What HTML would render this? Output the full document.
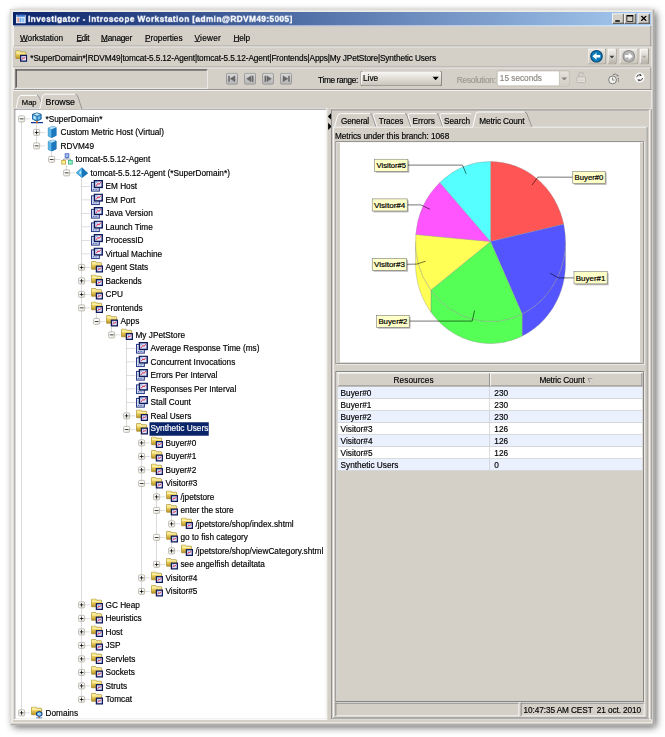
<!DOCTYPE html>
<html><head><meta charset="utf-8"><title>Investigator - Introscope Workstation</title>
<style>
html,body{margin:0;padding:0;background:#fff;}
body{width:665px;height:737px;overflow:hidden;position:relative;font-family:"Liberation Sans",sans-serif;}
#win{position:absolute;left:10.0px;top:9.2px;width:859px;height:954.8px;transform:scale(0.75);transform-origin:0 0;background:#D4D0C8;font-size:11px;color:#000;-webkit-text-stroke:0.22px currentColor;
 box-shadow:4px 4px 10px rgba(0,0,0,.62),0 0 12px rgba(0,0,0,.04);}
#win *{box-sizing:border-box;}
.abs{position:absolute;}
.mn::first-letter{text-decoration:underline;}
.t{position:absolute;white-space:pre;line-height:14px;height:14px;}
.frame1{position:absolute;left:0;top:0;right:0;bottom:0;border:1px solid;border-color:#D4D0C8 #CCC8C0 #CCC8C0 #D4D0C8;}
.frame2{position:absolute;left:1px;top:1px;right:1px;bottom:1px;border:1px solid;border-color:#fff #8C8C8C #8C8C8C #fff;box-shadow:inset 0 0 0 2px #EEECE7;}
#title{position:absolute;left:4px;top:3.7px;width:851px;height:19.7px;background:linear-gradient(90deg,#0A246A 0%,#A6CAF0 100%);}
#title .tt{position:absolute;left:20px;top:2px;will-change:transform;color:#fff;font-weight:bold;font-size:11px;line-height:14px;white-space:pre;letter-spacing:0.56px;-webkit-text-stroke:0.4px #fff;}
.cap{position:absolute;top:2px;width:16px;height:14px;background:#D4D0C8;border:1px solid;border-color:#fff #404040 #404040 #fff;box-shadow:inset -1px -1px 0 #808080;}
.sel{background:#0A246A;color:#fff;margin-top:-0.7px;height:17.4px !important;line-height:17.4px !important;}
.row{position:absolute;height:18px;}
.lbl{position:absolute;top:1px;height:16px;line-height:16px;white-space:pre;padding:0 1px;}
.box{position:absolute;width:9px;height:9px;background:linear-gradient(135deg,#fff 40%,#E4E0D4);border:1px solid #A8A498;border-radius:2px;}
.box i{position:absolute;left:1px;top:3px;width:5px;height:1px;background:#000;}
.box b{position:absolute;left:3px;top:1px;width:1px;height:5px;background:#000;}
.vl{position:absolute;width:1px;background:#cfcfcf;}
.hl{position:absolute;height:1px;background:#d4d4d4;}
.ic{position:absolute;width:16px;height:16px;overflow:visible;}
</style></head>
<body>
<div id="win">

<svg width="0" height="0" style="position:absolute">
<defs>
<linearGradient id="gFold" x1="0" y1="0" x2="0" y2="1"><stop offset="0" stop-color="#FFF6A8"/><stop offset="0.4" stop-color="#F2D660"/><stop offset="1" stop-color="#B8942A"/></linearGradient>
<linearGradient id="gBlue" x1="0" y1="0" x2="1" y2="1"><stop offset="0" stop-color="#7CC8EE"/><stop offset="1" stop-color="#1474B8"/></linearGradient>
<linearGradient id="gPb" x1="0" y1="0" x2="0" y2="1"><stop offset="0" stop-color="#DADADA"/><stop offset="1" stop-color="#B4B4B4"/></linearGradient>
<linearGradient id="gBtn" x1="0" y1="0" x2="0" y2="1"><stop offset="0" stop-color="#FFFFFF"/><stop offset="1" stop-color="#C9C5BC"/></linearGradient>
<symbol id="ic-metric" viewBox="0 0 16 16">
 <rect x="0.7" y="3.2" width="10.4" height="11.6" fill="#EEF3FC" stroke="#2A3A86" stroke-width="1.4"/>
 <path d="M2.4 12.6h7.2" stroke="#4464BC" stroke-width="1.7" stroke-dasharray="1.5 0.8"/>
 <path d="M2.5 5.4v5" stroke="#A8BCE8" stroke-width="1.1"/>
 <rect x="4.6" y="0.9" width="10.4" height="9" fill="#DDE8FF" stroke="#0E1A58" stroke-width="1.9"/>
 <path d="M6.6 8 L9.4 4.4 L10.6 6 L13.2 2.8" stroke="#E02C48" stroke-width="1.3" fill="none"/>
 <path d="M6.2 3.2h2.4" stroke="#6E94E6" stroke-width="1.1"/>
</symbol>
<symbol id="ic-folder" viewBox="0 0 16 16">
 <path d="M0.5 1.6 Q0.5 0.6 1.5 0.6 H5.6 Q6.5 0.6 6.9 1.3 L7.5 2.3 H13.2 Q14.2 2.3 14.2 3.2 V10.2 Q14.2 11 13.3 11 H1.4 Q0.5 11 0.5 10.2 Z" fill="url(#gFold)" stroke="#A08422" stroke-width="0.9"/>
 <path d="M1.2 3.9 H13.5" stroke="#FFFBD4" stroke-width="0.9"/>
</symbol>
<symbol id="ic-fm" viewBox="0 0 16 16">
 <use href="#ic-folder"/>
 <rect x="7.2" y="6.9" width="8" height="7.6" fill="#DCE6FF" stroke="#101A58" stroke-width="1.7"/>
 <path d="M8.9 12.6 L10.7 9.9 L11.6 11.2 L13.5 8.8" stroke="#E02C48" stroke-width="1.2" fill="none"/>
 <path d="M8.8 8.9h2" stroke="#6E8FE0" stroke-width="0.9"/>
</symbol>
<symbol id="ic-fd" viewBox="0 0 16 16">
 <use href="#ic-folder"/>
 <path d="M11 6.4 L14.6 8 V11.8 L11 13.6 L7.4 11.8 V8 Z" fill="#3C9CE0" stroke="#0A2C74" stroke-width="1.1"/>
 <path d="M9 9 L11 8.2 L13 9 V11 L11 12 L9 11 Z" fill="#D4EEFC"/>
 <path d="M11 9.4v1.6" stroke="#2A7CC8" stroke-width="1"/>
 <path d="M6.8 15.3h8.4" stroke="#2C70D0" stroke-width="1.3"/>
 <rect x="10.2" y="13.6" width="1.6" height="2.2" fill="#C85A18"/>
</symbol>
<symbol id="ic-sd" viewBox="0 0 16 16">
 <path d="M7.8 0.3 L13.6 2.6 V8.8 L7.8 11.6 L2 8.8 V2.6 Z" fill="#3A98D8" stroke="#0E4C84" stroke-width="1"/>
 <path d="M7.8 0.3 L13.6 2.6 L7.8 5.1 L2 2.6 Z" fill="#B6E4F8" stroke="#0E4C84" stroke-width="0.7"/>
 <path d="M2 2.6 L7.8 5.1 V11.6 L2 8.8 Z" fill="#6CC0EC" stroke="#0E4C84" stroke-width="0.7"/>
 <path d="M3.6 5 L6.2 6.1 V9 L3.6 7.8 Z" fill="#D2F0FC"/>
 <path d="M9.4 6.2 L12.2 5 V7.8 L9.4 9.2 Z" fill="#7CC6EE"/>
 <path d="M0 13.6 H16" stroke="#0B3A9A" stroke-width="1.7"/>
 <rect x="6.7" y="11.4" width="2.2" height="3" fill="#D86A1C"/>
</symbol>
<symbol id="ic-host" viewBox="0 0 16 16">
 <path d="M3 2.6 L9.4 0.4 L13.6 2 V12.6 L7.4 15.6 L3 13.4 Z" fill="#1F80C4" stroke="#0F5C9A" stroke-width="0.7"/>
 <path d="M3 2.6 L9.4 0.4 L13.6 2 L7.4 4.6 Z" fill="#B4E2F8"/>
 <path d="M3 2.6 L7.4 4.6 V15.6 L3 13.4 Z" fill="#5CB6E6"/>
 <path d="M7.4 4.6 L13.6 2 V12.6 L7.4 15.6 Z" fill="#1C78BC"/>
</symbol>
<symbol id="ic-proc" viewBox="0 0 16 16">
 <path d="M8 6 V8 M3.5 10 V8 H12.5 V10" stroke="#6E7E8E" stroke-width="1" fill="none"/>
 <rect x="5.5" y="1" width="5" height="5" fill="#A0BCF0" stroke="#3858BC" stroke-width="1"/>
 <rect x="1" y="9.8" width="5" height="5" fill="#FAEE98" stroke="#C0A028" stroke-width="1"/>
 <rect x="10" y="9.8" width="5" height="5" fill="#98F2CC" stroke="#28A880" stroke-width="1"/>
</symbol>
<symbol id="ic-agent" viewBox="0 0 16 16">
 <path d="M8 1.6 L15.6 9 L8 14.8 L0.4 8.4 Z" fill="#1F84C8" stroke="#0E5A98" stroke-width="0.7"/>
 <path d="M8 1.6 L8 14.8 L0.4 8.4 Z" fill="#4FB0E6"/>
 <path d="M8 1.6 L15.6 9 L8 14.8 Z" fill="#1774B8"/>
 <path d="M3.8 8.2 L6.6 5.2 L6.6 10.4 Z" fill="#C8ECFC"/>
</symbol>
</defs></svg>

<div class="frame1"></div><div class="frame2"></div>
<div id="title">
<svg class="abs" style="left:3.5px;top:3.1px" width="13" height="12.8" viewBox="0 0 16 16" preserveAspectRatio="none">
<rect x="0.5" y="1.5" width="15" height="13" fill="#fff" stroke="#fff"/>
<rect x="1" y="1" width="14" height="3.2" fill="#3A78D8"/>
<rect x="2" y="5.5" width="3" height="8" fill="#D8A090"/><rect x="5.5" y="5.5" width="3.5" height="8" fill="#7AA4E8"/><rect x="9.5" y="5.5" width="4.5" height="8" fill="#8EC0F4"/>
</svg>
<div class="tt">Investigator - Introscope Workstation [admin@RDVM49:5005]</div>
<div class="cap" style="left:799px"><div class="abs" style="left:3px;top:8px;width:6px;height:2px;background:#000"></div></div>
<div class="cap" style="left:815px"><div class="abs" style="left:2px;top:1px;width:9px;height:9px;border:1px solid #000;border-top-width:2px"></div></div>
<div class="cap" style="left:833px"><svg class="abs" style="left:3px;top:2px" width="8" height="7" viewBox="0 0 8 7"><path d="M0.5 0 L7.5 7 M7.5 0 L0.5 7" stroke="#000" stroke-width="1.6"/></svg></div>
</div>
<div class="t mn" style="letter-spacing:-0.051px;left:13.33px;top:30.63px">Workstation</div>
<div class="t mn" style="letter-spacing:-0.575px;left:88.67px;top:30.63px">Edit</div>
<div class="t mn" style="letter-spacing:-0.301px;left:121.33px;top:30.63px">Manager</div>
<div class="t mn" style="letter-spacing:-0.014px;left:180.00px;top:30.63px">Properties</div>
<div class="t mn" style="letter-spacing:0.315px;left:246.00px;top:30.63px">Viewer</div>
<div class="t mn" style="letter-spacing:-0.160px;left:298.00px;top:30.63px">Help</div>
<div class="abs" style="left:4px;width:851px;top:22.40px;height:27.47px;border:1px solid;border-color:#fff #808080 #808080 #fff"></div>
<div class="abs" style="left:4px;width:851px;top:49.83px;height:1px;background:#fff"></div>
<svg class="ic" style="left:6.93px;top:54.80px"><use href="#ic-fm"/></svg>
<div class="t" id="path" style="letter-spacing:-0.159px;left:27.07px;top:57.70px">*SuperDomain*|RDVM49|tomcat-5.5.12-Agent|tomcat-5.5.12-Agent|Frontends|Apps|My JPetStore|Synthetic Users</div>
<div class="abs" style="left:769.87px;top:52.13px;width:25.20px;height:22.13px;border:1px solid;border-color:#E4E1DA #8E8A80 #86827A #E4E1DA;border-radius:3px;background:linear-gradient(180deg,#E6E3DD 0%,#D8D5CD 60%,#C6C2B8 100%);box-shadow:inset 1px 1px 0 rgba(255,255,255,.95)"><svg class="abs" style="left:2.60px;top:1.07px" width="18" height="18" viewBox="0 0 18 18"><circle cx="9" cy="9" r="7.6" fill="#0A7EBC" stroke="#0A4472" stroke-width="1.5"/><path d="M3.6 9 L9 4.2 V7.2 H14 V10.8 H9 V13.8 Z" fill="#fff"/></svg></div>
<div class="abs" style="left:795.87px;top:52.13px;width:12.80px;height:22.13px;border:1px solid;border-color:#E4E1DA #8E8A80 #86827A #E4E1DA;border-radius:3px;background:linear-gradient(180deg,#F4F2EE 0%,#DCD9D1 45%,#B4B0A6 100%);box-shadow:inset 1px 1px 0 rgba(255,255,255,.95)"><svg class="abs" style="left:2.40px;top:8.57px" width="7" height="4" viewBox="0 0 7 4"><path d="M0 0 H7 L3.5 4 Z" fill="#404040"/></svg></div>
<div class="abs" style="left:812.27px;top:52.13px;width:25.73px;height:22.13px;border:1px solid;border-color:#E4E1DA #8E8A80 #86827A #E4E1DA;border-radius:3px;background:linear-gradient(180deg,#E6E3DD 0%,#D8D5CD 60%,#C6C2B8 100%);box-shadow:inset 1px 1px 0 rgba(255,255,255,.95)"><svg class="abs" style="left:2.87px;top:1.07px" width="18" height="18" viewBox="0 0 18 18"><circle cx="9" cy="9" r="7.6" fill="#B4B4B4" stroke="#8C8C8C" stroke-width="1.4"/><path d="M14.4 9 L9 4.2 V7.2 H4 V10.8 H9 V13.8 Z" fill="#fff"/></svg></div>
<div class="abs" style="left:838.80px;top:52.13px;width:13.07px;height:22.13px;border:1px solid;border-color:#E4E1DA #8E8A80 #86827A #E4E1DA;border-radius:3px;background:linear-gradient(180deg,#F4F2EE 0%,#DCD9D1 45%,#B4B0A6 100%);box-shadow:inset 1px 1px 0 rgba(255,255,255,.95)"><svg class="abs" style="left:2.53px;top:8.57px" width="7" height="4" viewBox="0 0 7 4"><path d="M0 0 H7 L3.5 4 Z" fill="#B0ACA4"/></svg></div>
<div class="abs" style="left:4px;top:76.87px;width:851px;height:1px;background:#808080"></div>
<div class="abs" style="left:4px;top:77.87px;width:851px;height:29.87px;border-top:1px solid #fff;border-bottom:1px solid #808080;border-left:1px solid #fff;border-right:1px solid #808080"></div>
<div class="abs" style="left:4px;top:107.73px;width:851px;height:1px;background:#fff"></div>
<div class="abs" style="left:7.20px;top:80.00px;width:256.80px;height:25.87px;border:1px solid;border-color:#6C6C6C #fff #fff #6C6C6C;"><div class="abs" style="left:0;top:0;right:0;bottom:0;border:1px solid;border-color:#3C3C3C #D4D0C8 #D4D0C8 #3C3C3C"></div></div>
<svg class="abs" style="left:288.40px;top:84.93px" width="16" height="16" viewBox="0 0 16 16"><rect x="0.6" y="0.6" width="14.8" height="14.8" rx="2.2" fill="url(#gPb)" stroke="#8E8E8E" stroke-width="1.1"/><path d="M4 4 V12" stroke="#686868" stroke-width="2"/><path d="M12 4 V12 L5.4 8 Z" fill="#686868" stroke="#686868" stroke-width="0.5"/></svg>
<svg class="abs" style="left:312.27px;top:84.93px" width="16" height="16" viewBox="0 0 16 16"><rect x="0.6" y="0.6" width="14.8" height="14.8" rx="2.2" fill="url(#gPb)" stroke="#8E8E8E" stroke-width="1.1"/><path d="M11.6 4 V12" stroke="#686868" stroke-width="2"/><path d="M9.6 4 V12 L3.4 8 Z" fill="#686868" stroke="#686868" stroke-width="0.5"/></svg>
<svg class="abs" style="left:336.13px;top:84.93px" width="16" height="16" viewBox="0 0 16 16"><rect x="0.6" y="0.6" width="14.8" height="14.8" rx="2.2" fill="url(#gPb)" stroke="#8E8E8E" stroke-width="1.1"/><path d="M4.4 4 V12" stroke="#686868" stroke-width="2"/><path d="M6.4 4 V12 L12.6 8 Z" fill="#686868" stroke="#686868" stroke-width="0.5"/></svg>
<svg class="abs" style="left:360.00px;top:84.93px" width="16" height="16" viewBox="0 0 16 16"><rect x="0.6" y="0.6" width="14.8" height="14.8" rx="2.2" fill="url(#gPb)" stroke="#8E8E8E" stroke-width="1.1"/><path d="M12 4 V12" stroke="#686868" stroke-width="2"/><path d="M4 4 V12 L10.6 8 Z" fill="#686868" stroke="#686868" stroke-width="0.5"/></svg>
<div class="t" style="letter-spacing:-0.452px;left:410.67px;top:86.50px">Time range:</div>
<div class="abs" style="left:466.67px;top:81.60px;width:109.60px;height:21.33px;border:1px solid;border-color:#8C887E #76726A #6C6860 #8C887E;border-radius:3.5px;background:linear-gradient(180deg,#FAFAF8 0%,#E4E1DA 45%,#C8C4BA 100%);box-shadow:inset 1px 1px 0 #fff"><div class="t" style="left:3px;top:2.5px">Live</div><svg class="abs" style="right:3.6px;top:7.5px" width="9" height="5" viewBox="0 0 9 5"><path d="M0 0 H9 L4.5 5 Z" fill="#000"/></svg></div>
<div class="t" style="letter-spacing:-0.277px;left:595.73px;top:86.50px;color:#9C9890">Resolution:</div>
<div class="abs" style="left:649.07px;top:81.60px;width:96.93px;height:21.33px;border:1px solid #B4B0A6;border-radius:3px;background:#fff;overflow:hidden"><div class="t" style="left:3px;top:2.5px;color:#8C8880">15 seconds</div><div class="abs" style="left:81.93px;top:-1px;bottom:-1px;right:-1px;border:1px solid #B4B0A6;border-radius:0 3px 3px 0;background:linear-gradient(180deg,#E6E3DC,#D2CEC5)"><svg class="abs" style="left:2.5px;top:8px" width="8" height="4.5" viewBox="0 0 8 4.5"><path d="M0 0 H8 L4 4.5 Z" fill="#8C8880"/></svg></div></div>
<svg class="abs" style="left:754.93px;top:83.47px" width="13" height="16" viewBox="0 0 13 16">
<path d="M3.4 8 V4.6 Q3.4 1.2 6.6 1.2 Q9.8 1.2 9.8 4.6" fill="none" stroke="#C2BEB6" stroke-width="2"/>
<rect x="0.8" y="7.6" width="11.4" height="7.6" rx="1" fill="#EAE8E3" stroke="#B6B2AA" stroke-width="1.3"/>
<path d="M2 10.4h9M2 12.6h9" stroke="#C4C0B8" stroke-width="0.9"/></svg>
<svg class="abs" style="left:797.33px;top:84.53px" width="17" height="16" viewBox="0 0 17 16">
<circle cx="6.4" cy="9.6" r="5.2" fill="#F4F2EE" stroke="#6E6E6E" stroke-width="1.2"/>
<path d="M6.4 6.4 V9.8 H9" stroke="#6E6E6E" stroke-width="1.1" fill="none"/>
<path d="M6.8 2.6 Q10.8 -0.2 13.2 4.4" stroke="#6E6E6E" stroke-width="1.1" fill="none"/>
<path d="M12 4.4 L14.6 4.6 L13.4 2.2" fill="#6E6E6E"/>
<path d="M14.2 7v2M14.2 10.4v1.6" stroke="#707070" stroke-width="1.4"/></svg>
<svg class="abs" style="left:831.70px;top:84.37px" width="15" height="15" viewBox="0 0 15 15">
<circle cx="7.5" cy="7.5" r="6.8" fill="#FAFAF8" stroke="#DCD9D2" stroke-width="0.8"/>
<path d="M3.6 7 Q4 3.6 7.6 3.6 L9 4.2" stroke="#3C3C3C" stroke-width="1.3" fill="none"/>
<path d="M11.4 8 Q11 11.4 7.4 11.4 L6 10.8" stroke="#3C3C3C" stroke-width="1.3" fill="none"/>
<path d="M8 2.4 L10.6 4.8 L7.4 5.8 Z" fill="#3C3C3C"/><path d="M7 12.6 L4.4 10.2 L7.6 9.2 Z" fill="#3C3C3C"/></svg>
<svg class="abs" style="left:0;top:0;overflow:visible" width="859" height="954.8" viewBox="0 0 859 954.8">
<!-- Map tab -->
<path d="M8.00 132.53 C10.00 126.40 10.00 115.73 14.67 115.20 L36.00 115.20 C39.33 115.47 40.00 121.07 44.67 132.53" fill="#D4D0C8" stroke="none"/>
<path d="M8.00 132.53 C10.00 126.40 10.00 115.73 14.67 115.20 L36.00 115.20" fill="none" stroke="#fff" stroke-width="1.3"/>
<path d="M36.00 115.20 C39.33 115.47 40.00 121.07 44.67 132.53" fill="none" stroke="#808080" stroke-width="1"/>
</svg>
<div class="abs" style="left:6.13px;top:133.33px;width:415.47px;height:814.13px;background:#fff;border:1px solid;border-width:1.7px 1px 1px 1.7px;border-color:#686868 #E8E6E0 #E8E6E0 #686868;box-shadow:0 0 0 1px #fff"></div>
<svg class="abs" style="left:0;top:0;overflow:visible" width="859" height="954.8" viewBox="0 0 859 954.8">
<path d="M39.47 133.87 C42.67 126.40 41.33 113.87 46.67 113.60 L87.33 113.60 C90.67 113.87 91.33 121.07 96.00 133.87 Z" fill="#D4D0C8" stroke="none"/>
<path d="M39.47 133.33 C42.67 126.40 41.33 113.87 46.67 113.60 L87.33 113.60" fill="none" stroke="#fff" stroke-width="1.3"/>
<path d="M87.33 113.60 C90.67 113.87 91.33 121.07 96.00 133.33" fill="none" stroke="#808080" stroke-width="1"/>
</svg>
<div class="t" style="letter-spacing:-0.033px;left:15.73px;top:117.83px;font-size:10.2px">Map</div>
<div class="t" style="letter-spacing:-0.024px;left:47.47px;top:116.90px;font-size:11.8px">Browse</div>
<div class="hl" style="left:15.20px;top:145.63px;width:12.07px"></div>
<div class="hl" style="left:35.20px;top:163.63px;width:12.07px"></div>
<div class="hl" style="left:35.20px;top:181.63px;width:12.07px"></div>
<div class="hl" style="left:55.20px;top:199.63px;width:12.07px"></div>
<div class="hl" style="left:75.20px;top:217.63px;width:12.07px"></div>
<div class="hl" style="left:95.20px;top:235.63px;width:12.07px"></div>
<div class="hl" style="left:95.20px;top:253.63px;width:12.07px"></div>
<div class="hl" style="left:95.20px;top:271.63px;width:12.07px"></div>
<div class="hl" style="left:95.20px;top:289.63px;width:12.07px"></div>
<div class="hl" style="left:95.20px;top:307.63px;width:12.07px"></div>
<div class="hl" style="left:95.20px;top:325.63px;width:12.07px"></div>
<div class="hl" style="left:95.20px;top:343.63px;width:12.07px"></div>
<div class="hl" style="left:95.20px;top:361.63px;width:12.07px"></div>
<div class="hl" style="left:95.20px;top:379.63px;width:12.07px"></div>
<div class="hl" style="left:95.20px;top:397.63px;width:12.07px"></div>
<div class="hl" style="left:115.20px;top:415.63px;width:12.07px"></div>
<div class="hl" style="left:135.20px;top:433.63px;width:12.07px"></div>
<div class="hl" style="left:155.20px;top:451.63px;width:12.07px"></div>
<div class="hl" style="left:155.20px;top:469.63px;width:12.07px"></div>
<div class="hl" style="left:155.20px;top:487.63px;width:12.07px"></div>
<div class="hl" style="left:155.20px;top:505.63px;width:12.07px"></div>
<div class="hl" style="left:155.20px;top:523.63px;width:12.07px"></div>
<div class="hl" style="left:155.20px;top:541.63px;width:12.07px"></div>
<div class="hl" style="left:155.20px;top:559.63px;width:12.07px"></div>
<div class="hl" style="left:175.20px;top:577.63px;width:12.07px"></div>
<div class="hl" style="left:175.20px;top:595.63px;width:12.07px"></div>
<div class="hl" style="left:175.20px;top:613.63px;width:12.07px"></div>
<div class="hl" style="left:175.20px;top:631.63px;width:12.07px"></div>
<div class="hl" style="left:195.20px;top:649.63px;width:12.07px"></div>
<div class="hl" style="left:195.20px;top:667.63px;width:12.07px"></div>
<div class="hl" style="left:215.20px;top:685.63px;width:12.07px"></div>
<div class="hl" style="left:195.20px;top:703.63px;width:12.07px"></div>
<div class="hl" style="left:215.20px;top:721.63px;width:12.07px"></div>
<div class="hl" style="left:195.20px;top:739.63px;width:12.07px"></div>
<div class="hl" style="left:175.20px;top:757.63px;width:12.07px"></div>
<div class="hl" style="left:175.20px;top:775.63px;width:12.07px"></div>
<div class="hl" style="left:95.20px;top:793.63px;width:12.07px"></div>
<div class="hl" style="left:95.20px;top:811.63px;width:12.07px"></div>
<div class="hl" style="left:95.20px;top:829.63px;width:12.07px"></div>
<div class="hl" style="left:95.20px;top:847.63px;width:12.07px"></div>
<div class="hl" style="left:95.20px;top:865.63px;width:12.07px"></div>
<div class="hl" style="left:95.20px;top:883.63px;width:12.07px"></div>
<div class="hl" style="left:95.20px;top:901.63px;width:12.07px"></div>
<div class="hl" style="left:95.20px;top:919.63px;width:12.07px"></div>
<div class="hl" style="left:15.20px;top:937.63px;width:12.07px"></div>
<div class="vl" style="left:34.70px;top:154.13px;height:28.00px"></div>
<div class="vl" style="left:54.70px;top:190.13px;height:10.00px"></div>
<div class="vl" style="left:74.70px;top:208.13px;height:10.00px"></div>
<div class="vl" style="left:94.70px;top:226.13px;height:694.00px"></div>
<div class="vl" style="left:114.70px;top:406.13px;height:10.00px"></div>
<div class="vl" style="left:134.70px;top:424.13px;height:10.00px"></div>
<div class="vl" style="left:154.70px;top:442.13px;height:118.00px"></div>
<div class="vl" style="left:174.70px;top:568.13px;height:208.00px"></div>
<div class="vl" style="left:194.70px;top:640.13px;height:100.00px"></div>
<div class="vl" style="left:214.70px;top:676.13px;height:10.00px"></div>
<div class="vl" style="left:214.70px;top:712.13px;height:10.00px"></div>
<div class="vl" style="left:14.70px;top:146.13px;height:792.00px"></div>
<div class="box" style="left:10.70px;top:141.63px"><i></i></div>
<svg class="ic" style="left:28.27px;top:137.53px"><use href="#ic-sd"/></svg>
<div class="lbl" style="left:46.33px;top:138.13px">*SuperDomain*</div>
<div class="box" style="left:30.70px;top:159.63px"><i></i><b></b></div>
<svg class="ic" style="left:48.27px;top:155.53px"><use href="#ic-host"/></svg>
<div class="lbl" style="left:66.33px;top:156.13px">Custom Metric Host (Virtual)</div>
<div class="box" style="left:30.70px;top:177.63px"><i></i></div>
<svg class="ic" style="left:48.27px;top:173.53px"><use href="#ic-host"/></svg>
<div class="lbl" style="left:66.33px;top:174.13px">RDVM49</div>
<div class="box" style="left:50.70px;top:195.63px"><i></i></div>
<svg class="ic" style="left:68.27px;top:191.53px"><use href="#ic-proc"/></svg>
<div class="lbl" style="left:86.33px;top:192.13px">tomcat-5.5.12-Agent</div>
<div class="box" style="left:70.70px;top:213.63px"><i></i></div>
<svg class="ic" style="left:88.27px;top:209.53px"><use href="#ic-agent"/></svg>
<div class="lbl" style="left:106.33px;top:210.13px">tomcat-5.5.12-Agent (*SuperDomain*)</div>
<svg class="ic" style="left:108.27px;top:227.53px"><use href="#ic-metric"/></svg>
<div class="lbl" style="left:126.33px;top:228.13px">EM Host</div>
<svg class="ic" style="left:108.27px;top:245.53px"><use href="#ic-metric"/></svg>
<div class="lbl" style="left:126.33px;top:246.13px">EM Port</div>
<svg class="ic" style="left:108.27px;top:263.53px"><use href="#ic-metric"/></svg>
<div class="lbl" style="left:126.33px;top:264.13px">Java Version</div>
<svg class="ic" style="left:108.27px;top:281.53px"><use href="#ic-metric"/></svg>
<div class="lbl" style="left:126.33px;top:282.13px">Launch Time</div>
<svg class="ic" style="left:108.27px;top:299.53px"><use href="#ic-metric"/></svg>
<div class="lbl" style="left:126.33px;top:300.13px">ProcessID</div>
<svg class="ic" style="left:108.27px;top:317.53px"><use href="#ic-metric"/></svg>
<div class="lbl" style="left:126.33px;top:318.13px">Virtual Machine</div>
<div class="box" style="left:90.70px;top:339.63px"><i></i><b></b></div>
<svg class="ic" style="left:108.27px;top:335.53px"><use href="#ic-fm"/></svg>
<div class="lbl" style="left:126.33px;top:336.13px">Agent Stats</div>
<div class="box" style="left:90.70px;top:357.63px"><i></i><b></b></div>
<svg class="ic" style="left:108.27px;top:353.53px"><use href="#ic-fm"/></svg>
<div class="lbl" style="left:126.33px;top:354.13px">Backends</div>
<div class="box" style="left:90.70px;top:375.63px"><i></i><b></b></div>
<svg class="ic" style="left:108.27px;top:371.53px"><use href="#ic-fm"/></svg>
<div class="lbl" style="left:126.33px;top:372.13px">CPU</div>
<div class="box" style="left:90.70px;top:393.63px"><i></i></div>
<svg class="ic" style="left:108.27px;top:389.53px"><use href="#ic-fm"/></svg>
<div class="lbl" style="left:126.33px;top:390.13px">Frontends</div>
<div class="box" style="left:110.70px;top:411.63px"><i></i></div>
<svg class="ic" style="left:128.27px;top:407.53px"><use href="#ic-fm"/></svg>
<div class="lbl" style="left:146.33px;top:408.13px">Apps</div>
<div class="box" style="left:130.70px;top:429.63px"><i></i></div>
<svg class="ic" style="left:148.27px;top:425.53px"><use href="#ic-fm"/></svg>
<div class="lbl" style="left:166.33px;top:426.13px">My JPetStore</div>
<svg class="ic" style="left:168.27px;top:443.53px"><use href="#ic-metric"/></svg>
<div class="lbl" style="left:186.33px;top:444.13px">Average Response Time (ms)</div>
<svg class="ic" style="left:168.27px;top:461.53px"><use href="#ic-metric"/></svg>
<div class="lbl" style="left:186.33px;top:462.13px">Concurrent Invocations</div>
<svg class="ic" style="left:168.27px;top:479.53px"><use href="#ic-metric"/></svg>
<div class="lbl" style="left:186.33px;top:480.13px">Errors Per Interval</div>
<svg class="ic" style="left:168.27px;top:497.53px"><use href="#ic-metric"/></svg>
<div class="lbl" style="left:186.33px;top:498.13px">Responses Per Interval</div>
<svg class="ic" style="left:168.27px;top:515.53px"><use href="#ic-metric"/></svg>
<div class="lbl" style="left:186.33px;top:516.13px">Stall Count</div>
<div class="box" style="left:150.70px;top:537.63px"><i></i><b></b></div>
<svg class="ic" style="left:168.27px;top:533.53px"><use href="#ic-fm"/></svg>
<div class="lbl" style="left:186.33px;top:534.13px">Real Users</div>
<div class="box" style="left:150.70px;top:555.63px"><i></i></div>
<svg class="ic" style="left:168.27px;top:551.53px"><use href="#ic-fm"/></svg>
<div class="lbl sel" style="left:186.33px;top:552.13px">Synthetic Users</div>
<div class="box" style="left:170.70px;top:573.63px"><i></i><b></b></div>
<svg class="ic" style="left:188.27px;top:569.53px"><use href="#ic-fm"/></svg>
<div class="lbl" style="left:206.33px;top:570.13px">Buyer#0</div>
<div class="box" style="left:170.70px;top:591.63px"><i></i><b></b></div>
<svg class="ic" style="left:188.27px;top:587.53px"><use href="#ic-fm"/></svg>
<div class="lbl" style="left:206.33px;top:588.13px">Buyer#1</div>
<div class="box" style="left:170.70px;top:609.63px"><i></i><b></b></div>
<svg class="ic" style="left:188.27px;top:605.53px"><use href="#ic-fm"/></svg>
<div class="lbl" style="left:206.33px;top:606.13px">Buyer#2</div>
<div class="box" style="left:170.70px;top:627.63px"><i></i></div>
<svg class="ic" style="left:188.27px;top:623.53px"><use href="#ic-fm"/></svg>
<div class="lbl" style="left:206.33px;top:624.13px">Visitor#3</div>
<div class="box" style="left:190.70px;top:645.63px"><i></i><b></b></div>
<svg class="ic" style="left:208.27px;top:641.53px"><use href="#ic-fm"/></svg>
<div class="lbl" style="left:226.33px;top:642.13px">/jpetstore</div>
<div class="box" style="left:190.70px;top:663.63px"><i></i></div>
<svg class="ic" style="left:208.27px;top:659.53px"><use href="#ic-fm"/></svg>
<div class="lbl" style="left:226.33px;top:660.13px">enter the store</div>
<div class="box" style="left:210.70px;top:681.63px"><i></i><b></b></div>
<svg class="ic" style="left:228.27px;top:677.53px"><use href="#ic-fm"/></svg>
<div class="lbl" style="left:246.33px;top:678.13px">/jpetstore/shop/index.shtml</div>
<div class="box" style="left:190.70px;top:699.63px"><i></i></div>
<svg class="ic" style="left:208.27px;top:695.53px"><use href="#ic-fm"/></svg>
<div class="lbl" style="left:226.33px;top:696.13px">go to fish category</div>
<div class="box" style="left:210.70px;top:717.63px"><i></i><b></b></div>
<svg class="ic" style="left:228.27px;top:713.53px"><use href="#ic-fm"/></svg>
<div class="lbl" style="left:246.33px;top:714.13px">/jpetstore/shop/viewCategory.shtml</div>
<div class="box" style="left:190.70px;top:735.63px"><i></i><b></b></div>
<svg class="ic" style="left:208.27px;top:731.53px"><use href="#ic-fm"/></svg>
<div class="lbl" style="left:226.33px;top:732.13px">see angelfish detailtata</div>
<div class="box" style="left:170.70px;top:753.63px"><i></i><b></b></div>
<svg class="ic" style="left:188.27px;top:749.53px"><use href="#ic-fm"/></svg>
<div class="lbl" style="left:206.33px;top:750.13px">Visitor#4</div>
<div class="box" style="left:170.70px;top:771.63px"><i></i><b></b></div>
<svg class="ic" style="left:188.27px;top:767.53px"><use href="#ic-fm"/></svg>
<div class="lbl" style="left:206.33px;top:768.13px">Visitor#5</div>
<div class="box" style="left:90.70px;top:789.63px"><i></i><b></b></div>
<svg class="ic" style="left:108.27px;top:785.53px"><use href="#ic-fm"/></svg>
<div class="lbl" style="left:126.33px;top:786.13px">GC Heap</div>
<div class="box" style="left:90.70px;top:807.63px"><i></i><b></b></div>
<svg class="ic" style="left:108.27px;top:803.53px"><use href="#ic-fm"/></svg>
<div class="lbl" style="left:126.33px;top:804.13px">Heuristics</div>
<div class="box" style="left:90.70px;top:825.63px"><i></i><b></b></div>
<svg class="ic" style="left:108.27px;top:821.53px"><use href="#ic-fm"/></svg>
<div class="lbl" style="left:126.33px;top:822.13px">Host</div>
<div class="box" style="left:90.70px;top:843.63px"><i></i><b></b></div>
<svg class="ic" style="left:108.27px;top:839.53px"><use href="#ic-fm"/></svg>
<div class="lbl" style="left:126.33px;top:840.13px">JSP</div>
<div class="box" style="left:90.70px;top:861.63px"><i></i><b></b></div>
<svg class="ic" style="left:108.27px;top:857.53px"><use href="#ic-fm"/></svg>
<div class="lbl" style="left:126.33px;top:858.13px">Servlets</div>
<div class="box" style="left:90.70px;top:879.63px"><i></i><b></b></div>
<svg class="ic" style="left:108.27px;top:875.53px"><use href="#ic-fm"/></svg>
<div class="lbl" style="left:126.33px;top:876.13px">Sockets</div>
<div class="box" style="left:90.70px;top:897.63px"><i></i><b></b></div>
<svg class="ic" style="left:108.27px;top:893.53px"><use href="#ic-fm"/></svg>
<div class="lbl" style="left:126.33px;top:894.13px">Struts</div>
<div class="box" style="left:90.70px;top:915.63px"><i></i><b></b></div>
<svg class="ic" style="left:108.27px;top:911.53px"><use href="#ic-fm"/></svg>
<div class="lbl" style="left:126.33px;top:912.13px">Tomcat</div>
<div class="box" style="left:10.70px;top:933.63px"><i></i><b></b></div>
<svg class="ic" style="left:28.27px;top:929.53px"><use href="#ic-fd"/></svg>
<div class="lbl" style="left:46.33px;top:930.13px">Domains</div>
<svg class="abs" style="left:422.93px;top:136.53px" width="7" height="26" viewBox="0 0 7 26">
<path d="M5.6 1.4 V11 L0.8 6.2 Z" fill="#000"/><path d="M1.2 14.8 V24.4 L6 19.6 Z" fill="#000"/></svg>
<div class="abs" style="left:428.27px;top:132.53px;width:427.60px;height:815.47px;border:1px solid;border-color:#fff #8C8C8C #fff #fff;"></div>
<div class="abs" style="left:428.27px;top:133.60px;width:425.07px;height:813.33px;border:1px solid;border-color:#6C6C6C #fff #8C8C8C #6C6C6C;"></div>
<div class="abs" style="left:431.47px;top:156.80px;width:418.27px;height:788.27px;border:1px solid;border-color:#fff #8C8C8C #9A9A9A #fff;"></div>
<svg class="abs" style="left:0;top:0;overflow:visible" width="859" height="954.8" viewBox="0 0 859 954.8">
<path d="M432.80 156.80 L436.53 142.93 Q437.33 139.47 440.27 139.47 L480.27 139.47" fill="none" stroke="#fff" stroke-width="1.2"/>
<path d="M480.27 139.47 Q482.13 139.73 482.93 142.40 L488.00 156.80" fill="none" stroke="#808080" stroke-width="1"/>
<path d="M489.33 156.80 L484.53 142.40 Q484.13 139.47 486.67 139.47 L526.67 139.47" fill="none" stroke="#fff" stroke-width="1.2"/>
<path d="M526.67 139.47 Q528.53 139.73 529.33 142.40 L534.40 156.80" fill="none" stroke="#808080" stroke-width="1"/>
<path d="M535.73 156.80 L530.93 142.40 Q530.53 139.47 533.07 139.47 L569.07 139.47" fill="none" stroke="#fff" stroke-width="1.2"/>
<path d="M569.07 139.47 Q570.93 139.73 571.73 142.40 L576.80 156.80" fill="none" stroke="#808080" stroke-width="1"/>
<path d="M578.13 156.80 L573.33 142.40 Q572.93 139.47 575.47 139.47 L614.93 139.47" fill="none" stroke="#fff" stroke-width="1.2"/>
<path d="M617.07 157.87 L620.80 141.07 Q621.33 137.33 624.53 137.33 L686.40 137.33 Q688.53 137.60 689.47 140.53 L695.73 157.87 Z" fill="#D4D0C8"/>
<path d="M617.07 157.07 L620.80 141.07 Q621.33 137.33 624.53 137.33 L686.40 137.33" fill="none" stroke="#fff" stroke-width="1.3"/>
<path d="M686.40 137.33 Q688.53 137.60 689.47 140.53 L695.73 157.07" fill="none" stroke="#808080" stroke-width="1"/>
</svg>
<div class="t" style="letter-spacing:-0.259px;left:441.33px;top:142.37px">General</div>
<div class="t" style="letter-spacing:-0.070px;left:491.60px;top:142.37px">Traces</div>
<div class="t" style="letter-spacing:-0.059px;left:536.80px;top:142.37px">Errors</div>
<div class="t" style="letter-spacing:0.012px;left:578.67px;top:142.37px">Search</div>
<div class="t" style="letter-spacing:-0.174px;left:625.60px;top:141.57px">Metric Count</div>
<div class="t" style="letter-spacing:-0.055px;left:433.20px;top:162.37px">Metrics under this branch: 1068</div>
<div class="abs" style="left:434.60px;top:176.73px;width:411.53px;height:297.40px;border:1px solid #fff"></div>
<div class="abs" style="left:433.60px;top:175.73px;width:411.53px;height:297.40px;border:1px solid #808080"></div>
<svg class="abs" style="left:439.73px;top:178.40px;background:#fff" width="400.53" height="292.53" viewBox="339.8 143.0 300.40 219.40">
<path d="M565.30 242.00 L565.27 244.27 L565.18 246.54 L565.03 248.80 L564.82 251.06 L564.55 253.32 L564.21 255.56 L563.82 257.79 L563.37 260.01 L562.87 262.22 L562.30 264.41 L561.67 266.58 L560.99 268.73 L560.25 270.86 L559.46 272.96 L558.60 275.04 L557.70 277.10 L556.74 279.12 L555.72 281.12 L554.65 283.09 L553.53 285.02 L552.36 286.91 L551.14 288.77 L549.88 290.60 L548.56 292.38 L547.19 294.13 L545.78 295.83 L544.33 297.49 L542.83 299.10 L541.29 300.67 L539.71 302.19 L538.09 303.66 L536.43 305.08 L534.73 306.45 L533.00 307.77 L531.23 309.04 L529.43 310.25 L527.60 311.41 L525.74 312.51 L523.85 313.55 L521.93 314.54 L521.93 336.54 L523.85 335.55 L525.74 334.51 L527.60 333.41 L529.43 332.25 L531.23 331.04 L533.00 329.77 L534.73 328.45 L536.43 327.08 L538.09 325.66 L539.71 324.19 L541.29 322.67 L542.83 321.10 L544.33 319.49 L545.78 317.83 L547.19 316.13 L548.56 314.38 L549.88 312.60 L551.14 310.77 L552.36 308.91 L553.53 307.02 L554.65 305.09 L555.72 303.12 L556.74 301.12 L557.70 299.10 L558.60 297.04 L559.46 294.96 L560.25 292.86 L560.99 290.73 L561.67 288.58 L562.30 286.41 L562.87 284.22 L563.37 282.01 L563.82 279.79 L564.21 277.56 L564.55 275.32 L564.82 273.06 L565.03 270.80 L565.18 268.54 L565.27 266.27 L565.30 264.00 Z" fill="#5555FF" stroke="#8C8C8C" stroke-width="0.35"/>
<path d="M521.93 314.54 L519.61 315.64 L517.26 316.65 L514.88 317.58 L512.47 318.43 L510.03 319.18 L507.57 319.85 L505.09 320.43 L502.60 320.92 L500.09 321.32 L497.57 321.62 L495.04 321.84 L492.51 321.97 L489.97 322.00 L487.43 321.94 L484.90 321.79 L482.37 321.55 L479.85 321.22 L477.35 320.80 L474.86 320.29 L472.38 319.68 L469.93 318.99 L467.50 318.21 L465.10 317.35 L462.72 316.40 L460.38 315.36 L458.07 314.24 L455.80 313.03 L453.57 311.75 L451.38 310.38 L449.23 308.94 L447.13 307.42 L445.08 305.82 L443.08 304.16 L441.14 302.42 L439.25 300.61 L437.42 298.73 L435.65 296.79 L433.95 294.79 L432.31 292.73 L430.73 290.61 L430.73 312.61 L432.31 314.73 L433.95 316.79 L435.65 318.79 L437.42 320.73 L439.25 322.61 L441.14 324.42 L443.08 326.16 L445.08 327.82 L447.13 329.42 L449.23 330.94 L451.38 332.38 L453.57 333.75 L455.80 335.03 L458.07 336.24 L460.38 337.36 L462.72 338.40 L465.10 339.35 L467.50 340.21 L469.93 340.99 L472.38 341.68 L474.86 342.29 L477.35 342.80 L479.85 343.22 L482.37 343.55 L484.90 343.79 L487.43 343.94 L489.97 344.00 L492.51 343.97 L495.04 343.84 L497.57 343.62 L500.09 343.32 L502.60 342.92 L505.09 342.43 L507.57 341.85 L510.03 341.18 L512.47 340.43 L514.88 339.58 L517.26 338.65 L519.61 337.64 L521.93 336.54 Z" fill="#55FF55" stroke="#8C8C8C" stroke-width="0.35"/>
<path d="M430.73 290.61 L430.00 289.56 L429.28 288.51 L428.57 287.44 L427.88 286.36 L427.21 285.26 L426.56 284.16 L425.92 283.04 L425.30 281.92 L424.70 280.78 L424.12 279.63 L423.55 278.48 L423.00 277.31 L422.47 276.13 L421.96 274.95 L421.46 273.75 L420.98 272.55 L420.53 271.34 L420.09 270.12 L419.66 268.89 L419.26 267.66 L418.88 266.42 L418.52 265.17 L418.17 263.92 L417.84 262.66 L417.54 261.40 L417.25 260.13 L416.98 258.85 L416.73 257.57 L416.51 256.29 L416.30 255.00 L416.11 253.71 L415.94 252.42 L415.79 251.12 L415.66 249.82 L415.55 248.52 L415.46 247.22 L415.39 245.92 L415.34 244.61 L415.31 243.31 L415.30 242.00 L415.30 264.00 L415.31 265.31 L415.34 266.61 L415.39 267.92 L415.46 269.22 L415.55 270.52 L415.66 271.82 L415.79 273.12 L415.94 274.42 L416.11 275.71 L416.30 277.00 L416.51 278.29 L416.73 279.57 L416.98 280.85 L417.25 282.13 L417.54 283.40 L417.84 284.66 L418.17 285.92 L418.52 287.17 L418.88 288.42 L419.26 289.66 L419.66 290.89 L420.09 292.12 L420.53 293.34 L420.98 294.55 L421.46 295.75 L421.96 296.95 L422.47 298.13 L423.00 299.31 L423.55 300.48 L424.12 301.63 L424.70 302.78 L425.30 303.92 L425.92 305.04 L426.56 306.16 L427.21 307.26 L427.88 308.36 L428.57 309.44 L429.28 310.51 L430.00 311.56 L430.73 312.61 Z" fill="#FFFF55" stroke="#8C8C8C" stroke-width="0.35"/>
<path d="M490.3 242.0 L490.30 162.00 A75.0 80.0 0 0 1 563.53 224.72 Z" fill="#FF5555" stroke="#8C8C8C" stroke-width="0.35"/>
<path d="M490.3 242.0 L563.53 224.72 A75.0 80.0 0 0 1 521.93 314.54 Z" fill="#5555FF" stroke="#8C8C8C" stroke-width="0.35"/>
<path d="M490.3 242.0 L521.93 314.54 A75.0 80.0 0 0 1 430.73 290.61 Z" fill="#55FF55" stroke="#8C8C8C" stroke-width="0.35"/>
<path d="M490.3 242.0 L430.73 290.61 A75.0 80.0 0 0 1 415.59 234.95 Z" fill="#FFFF55" stroke="#8C8C8C" stroke-width="0.35"/>
<path d="M490.3 242.0 L415.59 234.95 A75.0 80.0 0 0 1 439.66 182.99 Z" fill="#FF55FF" stroke="#8C8C8C" stroke-width="0.35"/>
<path d="M490.3 242.0 L439.66 182.99 A75.0 80.0 0 0 1 490.30 162.00 Z" fill="#55FFFF" stroke="#8C8C8C" stroke-width="0.35"/>
<path d="M407.7 165.6 L462.3 165.6 L466.0 174.4" fill="none" stroke="#000" stroke-width="0.55"/>
<path d="M407.0 205.4 L420.7 205.4 L429.8 209.8" fill="none" stroke="#000" stroke-width="0.55"/>
<path d="M406.5 264.8 L416.6 264.6 L425.5 261.7" fill="none" stroke="#000" stroke-width="0.55"/>
<path d="M409.0 321.6 L472.0 321.6 L474.4 311.0" fill="none" stroke="#000" stroke-width="0.55"/>
<path d="M572.6 177.7 L537.7 177.6 L531.7 185.7" fill="none" stroke="#000" stroke-width="0.55"/>
<path d="M573.8 278.4 L558.2 278.4 L549.8 273.7" fill="none" stroke="#000" stroke-width="0.55"/>
<rect x="375.9" y="161.1" width="33.20" height="12.10" fill="#000" opacity="0.28"/>
<rect x="374.5" y="159.7" width="33.20" height="12.10" fill="#FFFFC8" stroke="#6E6E6E" stroke-width="0.55"/>
<text x="391.10" y="168.50" text-anchor="middle" font-family="Liberation Sans, sans-serif" font-size="7.6" font-weight="normal" stroke="#000" stroke-width="0.2" textLength="29.60" lengthAdjust="spacingAndGlyphs" fill="#000">Visitor#5</text>
<rect x="373.4" y="200.8" width="35.00" height="12.10" fill="#000" opacity="0.28"/>
<rect x="372.0" y="199.4" width="35.00" height="12.10" fill="#FFFFC8" stroke="#6E6E6E" stroke-width="0.55"/>
<text x="389.50" y="208.20" text-anchor="middle" font-family="Liberation Sans, sans-serif" font-size="7.6" font-weight="normal" stroke="#000" stroke-width="0.2" textLength="31.40" lengthAdjust="spacingAndGlyphs" fill="#000">Visitor#4</text>
<rect x="373.4" y="260.2" width="34.50" height="12.00" fill="#000" opacity="0.28"/>
<rect x="372.0" y="258.8" width="34.50" height="12.00" fill="#FFFFC8" stroke="#6E6E6E" stroke-width="0.55"/>
<text x="389.25" y="267.50" text-anchor="middle" font-family="Liberation Sans, sans-serif" font-size="7.6" font-weight="normal" stroke="#000" stroke-width="0.2" textLength="30.90" lengthAdjust="spacingAndGlyphs" fill="#000">Visitor#3</text>
<rect x="377.79999999999995" y="317.2" width="32.60" height="12.00" fill="#000" opacity="0.28"/>
<rect x="376.4" y="315.8" width="32.60" height="12.00" fill="#FFFFC8" stroke="#6E6E6E" stroke-width="0.55"/>
<text x="392.70" y="324.50" text-anchor="middle" font-family="Liberation Sans, sans-serif" font-size="7.6" font-weight="normal" stroke="#000" stroke-width="0.2" textLength="29.00" lengthAdjust="spacingAndGlyphs" fill="#000">Buyer#2</text>
<rect x="574.0" y="173.20000000000002" width="32.40" height="12.20" fill="#000" opacity="0.28"/>
<rect x="572.6" y="171.8" width="32.40" height="12.20" fill="#FFFFC8" stroke="#6E6E6E" stroke-width="0.55"/>
<text x="588.80" y="180.70" text-anchor="middle" font-family="Liberation Sans, sans-serif" font-size="7.6" font-weight="normal" stroke="#000" stroke-width="0.2" textLength="28.80" lengthAdjust="spacingAndGlyphs" fill="#000">Buyer#0</text>
<rect x="575.1999999999999" y="273.59999999999997" width="33.20" height="12.20" fill="#000" opacity="0.28"/>
<rect x="573.8" y="272.2" width="33.20" height="12.20" fill="#FFFFC8" stroke="#6E6E6E" stroke-width="0.55"/>
<text x="590.40" y="281.10" text-anchor="middle" font-family="Liberation Sans, sans-serif" font-size="7.6" font-weight="normal" stroke="#000" stroke-width="0.2" textLength="29.60" lengthAdjust="spacingAndGlyphs" fill="#000">Buyer#1</text>
</svg>
<div class="abs" style="left:435.13px;top:483.67px;width:411.00px;height:440.87px;border:1px solid #fff"></div>
<div class="abs" style="left:434.13px;top:482.67px;width:411.00px;height:440.87px;border:1px solid #6C6C6C"></div>
<div class="abs" style="left:436.53px;top:484.80px;width:203.07px;height:18.40px;border:1px solid;border-color:#fff #808080 #808080 #fff;"></div>
<div class="abs" style="left:639.60px;top:484.80px;width:203.87px;height:18.40px;border:1px solid;border-color:#fff #808080 #808080 #fff;"></div>
<div class="t" style="letter-spacing:0.084px;left:511.47px;top:486.90px">Resources</div>
<div class="t" style="letter-spacing:-0.174px;left:705.87px;top:486.90px">Metric Count</div>
<svg class="abs" style="left:770.13px;top:492.00px" width="8" height="7" viewBox="0 0 8 7"><path d="M0.5 0.5 H7 L3.8 6.5 Z" fill="none" stroke="#808080" stroke-width="1"/><path d="M7 0.5 L3.8 6.5" stroke="#fff" stroke-width="1"/></svg>
<div class="abs" style="left:436.53px;top:503.60px;width:406.93px;height:16.00px;background:#EAF0FE;border-bottom:1px solid #CFCFCF;"></div>
<div class="t" style="left:440.80px;top:505.17px">Buyer#0</div>
<div class="t" style="left:645.73px;top:505.17px">230</div>
<div class="abs" style="left:436.53px;top:519.60px;width:406.93px;height:16.00px;background:#FFFFFF;border-bottom:1px solid #CFCFCF;"></div>
<div class="t" style="left:440.80px;top:521.17px">Buyer#1</div>
<div class="t" style="left:645.73px;top:521.17px">230</div>
<div class="abs" style="left:436.53px;top:535.60px;width:406.93px;height:16.00px;background:#EAF0FE;border-bottom:1px solid #CFCFCF;"></div>
<div class="t" style="left:440.80px;top:537.17px">Buyer#2</div>
<div class="t" style="left:645.73px;top:537.17px">230</div>
<div class="abs" style="left:436.53px;top:551.60px;width:406.93px;height:16.00px;background:#FFFFFF;border-bottom:1px solid #CFCFCF;"></div>
<div class="t" style="left:440.80px;top:553.17px">Visitor#3</div>
<div class="t" style="left:645.73px;top:553.17px">126</div>
<div class="abs" style="left:436.53px;top:567.60px;width:406.93px;height:16.00px;background:#EAF0FE;border-bottom:1px solid #CFCFCF;"></div>
<div class="t" style="left:440.80px;top:569.17px">Visitor#4</div>
<div class="t" style="left:645.73px;top:569.17px">126</div>
<div class="abs" style="left:436.53px;top:583.60px;width:406.93px;height:16.00px;background:#FFFFFF;border-bottom:1px solid #CFCFCF;"></div>
<div class="t" style="left:440.80px;top:585.17px">Visitor#5</div>
<div class="t" style="left:645.73px;top:585.17px">126</div>
<div class="abs" style="left:436.53px;top:599.60px;width:406.93px;height:16.00px;background:#EAF0FE;border-bottom:1px solid #CFCFCF;"></div>
<div class="t" style="left:440.80px;top:601.17px">Synthetic Users</div>
<div class="t" style="left:645.73px;top:601.17px">0</div>
<div class="abs" style="left:639.07px;top:503.60px;width:1.07px;height:112.00px;background:#CFCFCF;"></div>
<div class="abs" style="left:434.40px;top:924.53px;width:245.07px;height:18.67px;border:1px solid;border-color:#707070 #fff #fff #707070;"></div>
<div class="abs" style="left:681.33px;top:924.53px;width:164.53px;height:18.67px;border:1px solid;border-color:#707070 #fff #fff #707070;"></div>
<div class="t" style="letter-spacing:-0.136px;left:684.80px;top:926.77px">10:47:35 AM CEST  21 oct. 2010</div>
</div>
</body></html>
